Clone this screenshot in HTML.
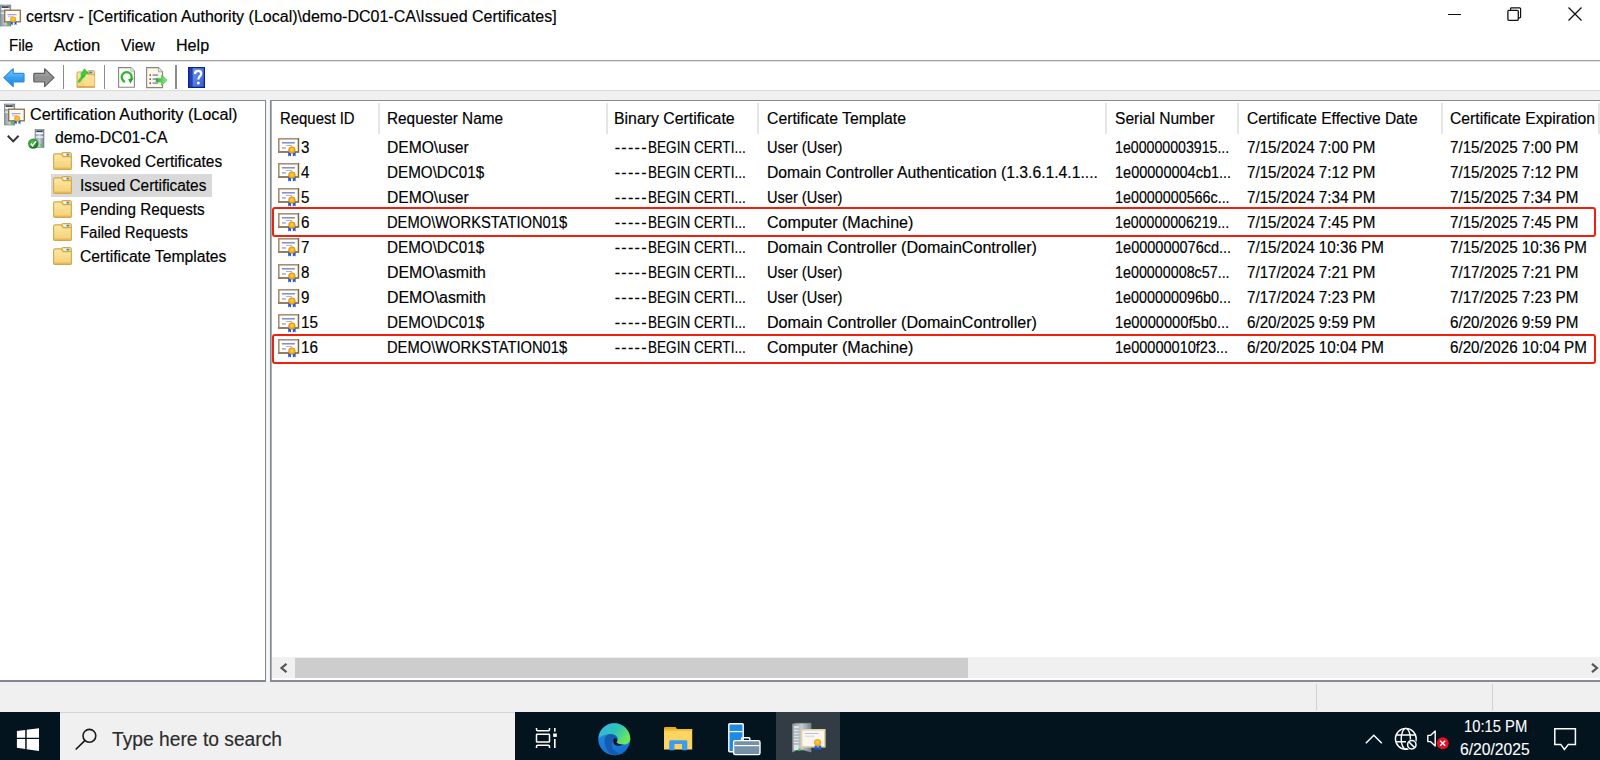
<!DOCTYPE html>
<html><head><meta charset="utf-8">
<style>
*{margin:0;padding:0;box-sizing:border-box}
html,body{width:1600px;height:760px;overflow:hidden;background:#fff}
body{position:relative;font-family:"Liberation Sans",sans-serif}
.t{position:absolute;white-space:pre;line-height:1;transform-origin:0 0;-webkit-text-stroke:0.18px currentColor}
.a{position:absolute}
svg{position:absolute;overflow:visible}
</style></head><body>
<!-- menu line -->
<div class="a" style="left:0;top:60px;width:1600px;height:1px;background:#a0a0a0"></div>
<div class="a" style="left:0;top:61px;width:1600px;height:1px;background:#e3e3e3"></div>
<!-- band -->
<div class="a" style="left:0;top:90px;width:1600px;height:622px;background:#f0f0f0"></div>
<div class="a" style="left:267px;top:100px;width:2px;height:582px;background:#f8f8f8"></div>
<div class="a" style="left:0;top:90px;width:1600px;height:1px;background:#dadada"></div>
<!-- left pane -->
<div class="a" style="left:0;top:100px;width:266px;height:582px;background:#fff;border-top:1px solid #828790;border-right:1px solid #828790;border-bottom:2px solid #828790"></div>
<!-- right pane -->
<div class="a" style="left:270px;top:100px;width:1330px;height:582px;background:#fff;border-top:1px solid #858a93;border-left:1px solid #858a93;border-bottom:2px solid #858a93;box-shadow:inset 1px 0 0 #a9adb4"></div>
<!-- status bar -->
<div class="a" style="left:0;top:682px;width:1600px;height:30px;background:#f0f0f0"></div>
<div class="a" style="left:1316px;top:684px;width:1px;height:26px;background:#d0d0d0"></div>
<div class="a" style="left:1492px;top:684px;width:1px;height:26px;background:#d0d0d0"></div>

<!-- header dividers -->
<div class="a" style="left:378px;top:103px;width:2px;height:31px;background:#e5e5e5"></div>
<div class="a" style="left:606px;top:103px;width:2px;height:31px;background:#e5e5e5"></div>
<div class="a" style="left:757px;top:103px;width:2px;height:31px;background:#e5e5e5"></div>
<div class="a" style="left:1105px;top:103px;width:2px;height:31px;background:#e5e5e5"></div>
<div class="a" style="left:1237px;top:103px;width:2px;height:31px;background:#e5e5e5"></div>
<div class="a" style="left:1441px;top:103px;width:2px;height:31px;background:#e5e5e5"></div>
<div class="a" style="left:1598px;top:103px;width:2px;height:31px;background:#e5e5e5"></div>

<!-- tree selection -->
<div class="a" style="left:51px;top:174px;width:161px;height:23px;background:#d9d9d9"></div>

<!-- red boxes -->
<div class="a" style="left:272px;top:207px;width:1324px;height:30px;border:2px solid #f0200c;border-radius:3px"></div>
<div class="a" style="left:272px;top:334px;width:1324px;height:30px;border:2px solid #f0200c;border-radius:3px"></div>

<!-- scrollbar -->
<div class="a" style="left:272px;top:657px;width:1328px;height:21px;background:#f0f0f0"></div>
<div class="a" style="left:295px;top:658px;width:673px;height:20px;background:#cdcdcd"></div>
<svg style="left:279px;top:663px" width="10" height="10" viewBox="0 0 10 10"><path d="M7.5 0.8 L2.5 5 L7.5 9.2" fill="none" stroke="#555" stroke-width="2.2"/></svg>
<svg style="left:1590px;top:663px" width="10" height="10" viewBox="0 0 10 10"><path d="M2 0.8 L7 5 L2 9.2" fill="none" stroke="#555" stroke-width="2.2"/></svg>

<svg width="0" height="0" style="position:absolute"><defs>
<linearGradient id="fold" x1="0" y1="0" x2="0" y2="1"><stop offset="0" stop-color="#fde9a6"/><stop offset="1" stop-color="#f3cf72"/></linearGradient>
<linearGradient id="tower" x1="0" y1="0" x2="1" y2="0"><stop offset="0" stop-color="#8b98a2"/><stop offset="0.5" stop-color="#c3ccd2"/><stop offset="1" stop-color="#76838d"/></linearGradient>
<radialGradient id="seal" cx="0.5" cy="0.45" r="0.6"><stop offset="0" stop-color="#ffcf50"/><stop offset="1" stop-color="#e49a08"/></radialGradient>
<linearGradient id="blueArr" x1="0" y1="0" x2="0" y2="1"><stop offset="0" stop-color="#7fd0ff"/><stop offset="0.5" stop-color="#3aa2f2"/><stop offset="1" stop-color="#1a7fdc"/></linearGradient>
<linearGradient id="grayArr" x1="0" y1="0" x2="0" y2="1"><stop offset="0" stop-color="#b8b8b8"/><stop offset="0.5" stop-color="#8e8e8e"/><stop offset="1" stop-color="#9c9c9c"/></linearGradient>
<radialGradient id="chk" cx="0.4" cy="0.35" r="0.7"><stop offset="0" stop-color="#4cc24c"/><stop offset="1" stop-color="#0d6e16"/></radialGradient>
<linearGradient id="help" x1="0" y1="0" x2="1" y2="0"><stop offset="0" stop-color="#1d3aa8"/><stop offset="0.25" stop-color="#2546b8"/><stop offset="0.3" stop-color="#4d7ee8"/><stop offset="1" stop-color="#3a64d0"/></linearGradient>
<linearGradient id="edge" x1="0" y1="1" x2="1" y2="0"><stop offset="0" stop-color="#0c59a4"/><stop offset="0.55" stop-color="#1b9de2"/><stop offset="1" stop-color="#5fd36a"/></linearGradient>
</defs></svg>
<svg style="left:0px;top:5px" width="21" height="22" viewBox="0 0 21 22">
<rect x="0.3" y="0" width="10.5" height="21" fill="url(#tower)" stroke="#6d7a84" stroke-width="0.6"/>
<rect x="2" y="1.4" width="6.5" height="1.4" fill="#24343e"/>
<rect x="1.2" y="3" width="8.6" height="1.9" fill="#f4f6f8"/>
<rect x="1.2" y="7.4" width="8.6" height="1.4" fill="#eef1f3"/>
<rect x="7.2" y="17.6" width="2.6" height="2" fill="#3ccf3c"/>
<rect x="4.7" y="5.2" width="15.6" height="11.6" fill="#fffaf0" stroke="#8c6e48" stroke-width="1.3"/>
<rect x="7.5" y="9.2" width="9" height="1" fill="#8090dd"/>
<rect x="8" y="11.4" width="5" height="0.8" fill="#aab2e0"/>
<path d="M10.8 16.5 h2 v3.8 l-1 -1 l-1 1z" fill="#1a5ce8"/><path d="M14.5 16.5 h2 v3.8 l-1 -1 l-1 1z" fill="#1a5ce8"/>
<circle cx="13.2" cy="14.6" r="3" fill="url(#seal)"/>
</svg>
<svg style="left:4px;top:103.6px" width="21" height="22" viewBox="0 0 21 22">
<rect x="0.3" y="0" width="10.5" height="21" fill="url(#tower)" stroke="#6d7a84" stroke-width="0.6"/>
<rect x="2" y="1.4" width="6.5" height="1.4" fill="#24343e"/>
<rect x="1.2" y="3" width="8.6" height="1.9" fill="#f4f6f8"/>
<rect x="1.2" y="7.4" width="8.6" height="1.4" fill="#eef1f3"/>
<rect x="7.2" y="17.6" width="2.6" height="2" fill="#3ccf3c"/>
<rect x="4.7" y="5.2" width="15.6" height="11.6" fill="#fffaf0" stroke="#8c6e48" stroke-width="1.3"/>
<rect x="7.5" y="9.2" width="9" height="1" fill="#8090dd"/>
<rect x="8" y="11.4" width="5" height="0.8" fill="#aab2e0"/>
<path d="M10.8 16.5 h2 v3.8 l-1 -1 l-1 1z" fill="#1a5ce8"/><path d="M14.5 16.5 h2 v3.8 l-1 -1 l-1 1z" fill="#1a5ce8"/>
<circle cx="13.2" cy="14.6" r="3" fill="url(#seal)"/>
</svg>
<svg style="left:7px;top:135px" width="13" height="8" viewBox="0 0 13 8"><path d="M0.8 0.8 L6.2 6.4 L11.6 0.8" fill="none" stroke="#333" stroke-width="2"/></svg>
<svg style="left:27px;top:128.5px" width="18" height="20" viewBox="0 0 18 20">
<rect x="8" y="0.5" width="9" height="18" fill="url(#tower)" stroke="#6d7a84" stroke-width="0.6"/>
<rect x="9.6" y="1.6" width="5.8" height="1.3" fill="#24343e"/>
<rect x="8.8" y="3.4" width="7.4" height="1.8" fill="#f4f6f8"/>
<rect x="8.8" y="7.3" width="7.4" height="1.6" fill="#eef1f3"/>
<rect x="13.5" y="15.2" width="2.4" height="2" fill="#3ccf3c"/>
<circle cx="6.2" cy="14.6" r="5.2" fill="url(#chk)"/>
<path d="M3.6 14.6 L5.6 16.8 L9 12.2" fill="none" stroke="#fff" stroke-width="1.6"/>
</svg>
<svg style="left:53px;top:152.0px" width="19" height="18" viewBox="0 0 19 18">
<rect x="8.6" y="0.5" width="9.8" height="6" rx="1.6" fill="#f6d98a" stroke="#d3a64a" stroke-width="1"/>
<rect x="10.3" y="1.7" width="4" height="1.8" rx="0.9" fill="#ffffff"/><rect x="13.2" y="1.7" width="3.2" height="1.8" rx="0.9" fill="#3b8ee6"/>
<path d="M0.6 3.2 Q0.6 1.9 1.9 1.9 H7.6 Q8.4 1.9 8.9 2.6 L10.2 4.6 H17.1 Q18.4 4.6 18.4 5.9 V16.2 Q18.4 17.5 17.1 17.5 H1.9 Q0.6 17.5 0.6 16.2 Z" fill="url(#fold)" stroke="#d3a64a" stroke-width="1.1"/>
<rect x="1.3" y="15.6" width="16.4" height="1.4" fill="#e2b858"/>
</svg>
<svg style="left:53px;top:175.8px" width="19" height="18" viewBox="0 0 19 18">
<rect x="8.6" y="0.5" width="9.8" height="6" rx="1.6" fill="#f6d98a" stroke="#d3a64a" stroke-width="1"/>
<rect x="10.3" y="1.7" width="4" height="1.8" rx="0.9" fill="#ffffff"/><rect x="13.2" y="1.7" width="3.2" height="1.8" rx="0.9" fill="#3b8ee6"/>
<path d="M0.6 3.2 Q0.6 1.9 1.9 1.9 H7.6 Q8.4 1.9 8.9 2.6 L10.2 4.6 H17.1 Q18.4 4.6 18.4 5.9 V16.2 Q18.4 17.5 17.1 17.5 H1.9 Q0.6 17.5 0.6 16.2 Z" fill="url(#fold)" stroke="#d3a64a" stroke-width="1.1"/>
<rect x="1.3" y="15.6" width="16.4" height="1.4" fill="#e2b858"/>
</svg>
<svg style="left:53px;top:199.6px" width="19" height="18" viewBox="0 0 19 18">
<rect x="8.6" y="0.5" width="9.8" height="6" rx="1.6" fill="#f6d98a" stroke="#d3a64a" stroke-width="1"/>
<rect x="10.3" y="1.7" width="4" height="1.8" rx="0.9" fill="#ffffff"/><rect x="13.2" y="1.7" width="3.2" height="1.8" rx="0.9" fill="#3b8ee6"/>
<path d="M0.6 3.2 Q0.6 1.9 1.9 1.9 H7.6 Q8.4 1.9 8.9 2.6 L10.2 4.6 H17.1 Q18.4 4.6 18.4 5.9 V16.2 Q18.4 17.5 17.1 17.5 H1.9 Q0.6 17.5 0.6 16.2 Z" fill="url(#fold)" stroke="#d3a64a" stroke-width="1.1"/>
<rect x="1.3" y="15.6" width="16.4" height="1.4" fill="#e2b858"/>
</svg>
<svg style="left:53px;top:223.4px" width="19" height="18" viewBox="0 0 19 18">
<rect x="8.6" y="0.5" width="9.8" height="6" rx="1.6" fill="#f6d98a" stroke="#d3a64a" stroke-width="1"/>
<rect x="10.3" y="1.7" width="4" height="1.8" rx="0.9" fill="#ffffff"/><rect x="13.2" y="1.7" width="3.2" height="1.8" rx="0.9" fill="#3b8ee6"/>
<path d="M0.6 3.2 Q0.6 1.9 1.9 1.9 H7.6 Q8.4 1.9 8.9 2.6 L10.2 4.6 H17.1 Q18.4 4.6 18.4 5.9 V16.2 Q18.4 17.5 17.1 17.5 H1.9 Q0.6 17.5 0.6 16.2 Z" fill="url(#fold)" stroke="#d3a64a" stroke-width="1.1"/>
<rect x="1.3" y="15.6" width="16.4" height="1.4" fill="#e2b858"/>
</svg>
<svg style="left:53px;top:247.2px" width="19" height="18" viewBox="0 0 19 18">
<rect x="8.6" y="0.5" width="9.8" height="6" rx="1.6" fill="#f6d98a" stroke="#d3a64a" stroke-width="1"/>
<rect x="10.3" y="1.7" width="4" height="1.8" rx="0.9" fill="#ffffff"/><rect x="13.2" y="1.7" width="3.2" height="1.8" rx="0.9" fill="#3b8ee6"/>
<path d="M0.6 3.2 Q0.6 1.9 1.9 1.9 H7.6 Q8.4 1.9 8.9 2.6 L10.2 4.6 H17.1 Q18.4 4.6 18.4 5.9 V16.2 Q18.4 17.5 17.1 17.5 H1.9 Q0.6 17.5 0.6 16.2 Z" fill="url(#fold)" stroke="#d3a64a" stroke-width="1.1"/>
<rect x="1.3" y="15.6" width="16.4" height="1.4" fill="#e2b858"/>
</svg>
<svg style="left:278px;top:138.0px" width="22.0" height="19.0" viewBox="0 0 22 19">
<rect x="0" y="0" width="21.2" height="14.8" fill="#7a6242"/>
<rect x="0" y="0" width="20" height="13.6" fill="#a89172"/>
<rect x="1.6" y="1.6" width="18" height="11.4" fill="#fffdf8"/>
<rect x="3.9" y="4.1" width="13" height="1.4" fill="#7384d2"/>
<rect x="8" y="7" width="6" height="0.9" fill="#a2aade"/>
<rect x="4" y="9.2" width="3.8" height="1.5" fill="#9aa4dc"/>
<path d="M10.2 14 H13 V18.6 L11.6 17.6 L10.2 18.6 Z" fill="#1c55e6"/>
<path d="M14.8 14 H17.6 V18.6 L16.2 17.6 L14.8 18.6 Z" fill="#1c55e6"/>
<circle cx="13.9" cy="12.1" r="3.5" fill="url(#seal)"/>
<circle cx="13.9" cy="12.1" r="3.2" fill="none" stroke="#d08a00" stroke-width="0.6"/>
</svg>
<svg style="left:278px;top:163.1px" width="22.0" height="19.0" viewBox="0 0 22 19">
<rect x="0" y="0" width="21.2" height="14.8" fill="#7a6242"/>
<rect x="0" y="0" width="20" height="13.6" fill="#a89172"/>
<rect x="1.6" y="1.6" width="18" height="11.4" fill="#fffdf8"/>
<rect x="3.9" y="4.1" width="13" height="1.4" fill="#7384d2"/>
<rect x="8" y="7" width="6" height="0.9" fill="#a2aade"/>
<rect x="4" y="9.2" width="3.8" height="1.5" fill="#9aa4dc"/>
<path d="M10.2 14 H13 V18.6 L11.6 17.6 L10.2 18.6 Z" fill="#1c55e6"/>
<path d="M14.8 14 H17.6 V18.6 L16.2 17.6 L14.8 18.6 Z" fill="#1c55e6"/>
<circle cx="13.9" cy="12.1" r="3.5" fill="url(#seal)"/>
<circle cx="13.9" cy="12.1" r="3.2" fill="none" stroke="#d08a00" stroke-width="0.6"/>
</svg>
<svg style="left:278px;top:188.2px" width="22.0" height="19.0" viewBox="0 0 22 19">
<rect x="0" y="0" width="21.2" height="14.8" fill="#7a6242"/>
<rect x="0" y="0" width="20" height="13.6" fill="#a89172"/>
<rect x="1.6" y="1.6" width="18" height="11.4" fill="#fffdf8"/>
<rect x="3.9" y="4.1" width="13" height="1.4" fill="#7384d2"/>
<rect x="8" y="7" width="6" height="0.9" fill="#a2aade"/>
<rect x="4" y="9.2" width="3.8" height="1.5" fill="#9aa4dc"/>
<path d="M10.2 14 H13 V18.6 L11.6 17.6 L10.2 18.6 Z" fill="#1c55e6"/>
<path d="M14.8 14 H17.6 V18.6 L16.2 17.6 L14.8 18.6 Z" fill="#1c55e6"/>
<circle cx="13.9" cy="12.1" r="3.5" fill="url(#seal)"/>
<circle cx="13.9" cy="12.1" r="3.2" fill="none" stroke="#d08a00" stroke-width="0.6"/>
</svg>
<svg style="left:278px;top:213.3px" width="22.0" height="19.0" viewBox="0 0 22 19">
<rect x="0" y="0" width="21.2" height="14.8" fill="#7a6242"/>
<rect x="0" y="0" width="20" height="13.6" fill="#a89172"/>
<rect x="1.6" y="1.6" width="18" height="11.4" fill="#fffdf8"/>
<rect x="3.9" y="4.1" width="13" height="1.4" fill="#7384d2"/>
<rect x="8" y="7" width="6" height="0.9" fill="#a2aade"/>
<rect x="4" y="9.2" width="3.8" height="1.5" fill="#9aa4dc"/>
<path d="M10.2 14 H13 V18.6 L11.6 17.6 L10.2 18.6 Z" fill="#1c55e6"/>
<path d="M14.8 14 H17.6 V18.6 L16.2 17.6 L14.8 18.6 Z" fill="#1c55e6"/>
<circle cx="13.9" cy="12.1" r="3.5" fill="url(#seal)"/>
<circle cx="13.9" cy="12.1" r="3.2" fill="none" stroke="#d08a00" stroke-width="0.6"/>
</svg>
<svg style="left:278px;top:238.4px" width="22.0" height="19.0" viewBox="0 0 22 19">
<rect x="0" y="0" width="21.2" height="14.8" fill="#7a6242"/>
<rect x="0" y="0" width="20" height="13.6" fill="#a89172"/>
<rect x="1.6" y="1.6" width="18" height="11.4" fill="#fffdf8"/>
<rect x="3.9" y="4.1" width="13" height="1.4" fill="#7384d2"/>
<rect x="8" y="7" width="6" height="0.9" fill="#a2aade"/>
<rect x="4" y="9.2" width="3.8" height="1.5" fill="#9aa4dc"/>
<path d="M10.2 14 H13 V18.6 L11.6 17.6 L10.2 18.6 Z" fill="#1c55e6"/>
<path d="M14.8 14 H17.6 V18.6 L16.2 17.6 L14.8 18.6 Z" fill="#1c55e6"/>
<circle cx="13.9" cy="12.1" r="3.5" fill="url(#seal)"/>
<circle cx="13.9" cy="12.1" r="3.2" fill="none" stroke="#d08a00" stroke-width="0.6"/>
</svg>
<svg style="left:278px;top:263.5px" width="22.0" height="19.0" viewBox="0 0 22 19">
<rect x="0" y="0" width="21.2" height="14.8" fill="#7a6242"/>
<rect x="0" y="0" width="20" height="13.6" fill="#a89172"/>
<rect x="1.6" y="1.6" width="18" height="11.4" fill="#fffdf8"/>
<rect x="3.9" y="4.1" width="13" height="1.4" fill="#7384d2"/>
<rect x="8" y="7" width="6" height="0.9" fill="#a2aade"/>
<rect x="4" y="9.2" width="3.8" height="1.5" fill="#9aa4dc"/>
<path d="M10.2 14 H13 V18.6 L11.6 17.6 L10.2 18.6 Z" fill="#1c55e6"/>
<path d="M14.8 14 H17.6 V18.6 L16.2 17.6 L14.8 18.6 Z" fill="#1c55e6"/>
<circle cx="13.9" cy="12.1" r="3.5" fill="url(#seal)"/>
<circle cx="13.9" cy="12.1" r="3.2" fill="none" stroke="#d08a00" stroke-width="0.6"/>
</svg>
<svg style="left:278px;top:288.6px" width="22.0" height="19.0" viewBox="0 0 22 19">
<rect x="0" y="0" width="21.2" height="14.8" fill="#7a6242"/>
<rect x="0" y="0" width="20" height="13.6" fill="#a89172"/>
<rect x="1.6" y="1.6" width="18" height="11.4" fill="#fffdf8"/>
<rect x="3.9" y="4.1" width="13" height="1.4" fill="#7384d2"/>
<rect x="8" y="7" width="6" height="0.9" fill="#a2aade"/>
<rect x="4" y="9.2" width="3.8" height="1.5" fill="#9aa4dc"/>
<path d="M10.2 14 H13 V18.6 L11.6 17.6 L10.2 18.6 Z" fill="#1c55e6"/>
<path d="M14.8 14 H17.6 V18.6 L16.2 17.6 L14.8 18.6 Z" fill="#1c55e6"/>
<circle cx="13.9" cy="12.1" r="3.5" fill="url(#seal)"/>
<circle cx="13.9" cy="12.1" r="3.2" fill="none" stroke="#d08a00" stroke-width="0.6"/>
</svg>
<svg style="left:278px;top:313.70000000000005px" width="22.0" height="19.0" viewBox="0 0 22 19">
<rect x="0" y="0" width="21.2" height="14.8" fill="#7a6242"/>
<rect x="0" y="0" width="20" height="13.6" fill="#a89172"/>
<rect x="1.6" y="1.6" width="18" height="11.4" fill="#fffdf8"/>
<rect x="3.9" y="4.1" width="13" height="1.4" fill="#7384d2"/>
<rect x="8" y="7" width="6" height="0.9" fill="#a2aade"/>
<rect x="4" y="9.2" width="3.8" height="1.5" fill="#9aa4dc"/>
<path d="M10.2 14 H13 V18.6 L11.6 17.6 L10.2 18.6 Z" fill="#1c55e6"/>
<path d="M14.8 14 H17.6 V18.6 L16.2 17.6 L14.8 18.6 Z" fill="#1c55e6"/>
<circle cx="13.9" cy="12.1" r="3.5" fill="url(#seal)"/>
<circle cx="13.9" cy="12.1" r="3.2" fill="none" stroke="#d08a00" stroke-width="0.6"/>
</svg>
<svg style="left:278px;top:338.8px" width="22.0" height="19.0" viewBox="0 0 22 19">
<rect x="0" y="0" width="21.2" height="14.8" fill="#7a6242"/>
<rect x="0" y="0" width="20" height="13.6" fill="#a89172"/>
<rect x="1.6" y="1.6" width="18" height="11.4" fill="#fffdf8"/>
<rect x="3.9" y="4.1" width="13" height="1.4" fill="#7384d2"/>
<rect x="8" y="7" width="6" height="0.9" fill="#a2aade"/>
<rect x="4" y="9.2" width="3.8" height="1.5" fill="#9aa4dc"/>
<path d="M10.2 14 H13 V18.6 L11.6 17.6 L10.2 18.6 Z" fill="#1c55e6"/>
<path d="M14.8 14 H17.6 V18.6 L16.2 17.6 L14.8 18.6 Z" fill="#1c55e6"/>
<circle cx="13.9" cy="12.1" r="3.5" fill="url(#seal)"/>
<circle cx="13.9" cy="12.1" r="3.2" fill="none" stroke="#d08a00" stroke-width="0.6"/>
</svg>
<svg style="left:3px;top:68px" width="22" height="20" viewBox="0 0 22 20"><path d="M0.8 9.6 L10.2 0.8 V5.4 H20.2 Q21 5.4 21 6.2 V13.2 Q21 14 20.2 14 H10.2 V18.6 Z" fill="url(#blueArr)" stroke="#2d8ee0" stroke-width="1.2" stroke-linejoin="round"/></svg>
<svg style="left:33px;top:68px" width="22" height="20" viewBox="0 0 22 20"><path d="M21 9.6 L11.6 0.8 V5.4 H1.6 Q0.8 5.4 0.8 6.2 V13.2 Q0.8 14 1.6 14 H11.6 V18.6 Z" fill="url(#grayArr)" stroke="#5e5e5e" stroke-width="1.2" stroke-linejoin="round"/></svg>
<div class="a" style="left:62.5px;top:65px;width:1.5px;height:24px;background:#8c8c8c"></div>
<div class="a" style="left:103.5px;top:65px;width:1.5px;height:24px;background:#8c8c8c"></div>
<div class="a" style="left:175px;top:65px;width:1.5px;height:24px;background:#8c8c8c"></div>
<svg style="left:75.5px;top:68px" width="20" height="21" viewBox="0 0 20 21">
<path d="M1 5.2 Q1 4 2.2 4 H8 L9.2 5.6 H17.6 Q18.6 5.6 18.6 6.6 V19.4 H1 Z" fill="url(#fold)" stroke="#cfa24c" stroke-width="1"/>
<rect x="11.6" y="2.6" width="7" height="4" rx="1.6" fill="#f6d98a" stroke="#cfa24c" stroke-width="0.8"/>
<rect x="13" y="3.6" width="3.4" height="1.8" rx="0.9" fill="#3b8ee6"/>
<rect x="8.4" y="8" width="10.2" height="11.4" fill="#fbe096" opacity="0.7"/>
<rect x="1" y="18" width="17.6" height="1.6" fill="#d9ad52"/>
<path d="M3.2 13.4 Q5.4 9.6 8.2 7.6" fill="none" stroke="#3ccc3c" stroke-width="2.8" stroke-linecap="round"/>
<path d="M8.4 0.8 L12.8 5.6 L9.2 6.4 L5.4 9.4 L5 5.8 Z" fill="#3ccc3c" stroke="#2aa82a" stroke-width="0.5"/>
</svg>
<svg style="left:118px;top:67px" width="18" height="21" viewBox="0 0 18 21">
<path d="M0.6 0.6 H12.8 L16.4 4.2 V20.2 H0.6 Z" fill="#fff" stroke="#858585" stroke-width="1.1"/>
<path d="M12.8 0.6 V4.2 H16.4" fill="#ececec" stroke="#a8a8a8" stroke-width="0.7"/>
<path d="M7 14.8 A5 5 0 1 1 12.6 13.2" fill="none" stroke="#2dbb2d" stroke-width="2.3"/>
<path d="M10.2 12.2 L15.6 11.2 L12.4 16.4 Z" fill="#1fa81f"/>
</svg>
<svg style="left:146px;top:67px" width="22" height="22" viewBox="0 0 22 22">
<path d="M0.6 0.6 H12.4 L16.6 4.8 V20.6 H0.6 Z" fill="#fcf8e6" stroke="#858585" stroke-width="1.1"/>
<path d="M12.4 0.6 V4.8 H16.6" fill="#e6e6e6" stroke="#9a9a9a" stroke-width="0.8"/>
<rect x="3.5" y="7.4" width="1.4" height="1.4" fill="#333"/><rect x="6.6" y="7.4" width="5.6" height="1.3" fill="#7a7ab8"/>
<rect x="3.5" y="11.4" width="1.4" height="1.4" fill="#333"/><rect x="6.6" y="11.4" width="5.6" height="1.3" fill="#7a7ab8"/>
<rect x="3.5" y="15.4" width="1.4" height="1.4" fill="#333"/><rect x="6.6" y="15.4" width="5.6" height="1.3" fill="#7a7ab8"/>
<defs><linearGradient id="expG" x1="0" y1="0" x2="1" y2="0"><stop offset="0" stop-color="#2fae2f"/><stop offset="1" stop-color="#8ef08e"/></linearGradient></defs><path d="M10 11.4 H15.6 V8 L21.2 13.2 L15.6 18.4 V15 H10 Z" fill="url(#expG)" stroke="#3cb43c" stroke-width="0.6"/>
</svg>
<svg style="left:188px;top:66.5px" width="17" height="21" viewBox="0 0 17 21">
<defs><linearGradient id="helpR" x1="0" y1="0" x2="1" y2="1"><stop offset="0" stop-color="#6b95f0"/><stop offset="1" stop-color="#3560d0"/></linearGradient></defs>
<rect x="0" y="0" width="17" height="21" fill="#0d1f8c"/>
<rect x="1.2" y="1.2" width="3.4" height="18.6" fill="#2440b0"/>
<rect x="4.6" y="1.2" width="11.2" height="18.6" fill="url(#helpR)"/>
<path d="M7 7 Q7 3.8 10.2 3.8 Q13.2 3.8 13.2 6.6 Q13.2 8.6 11.4 9.8 Q10.4 10.6 10.4 12.6" fill="none" stroke="#fff" stroke-width="2.3"/>
<circle cx="10.3" cy="16" r="1.5" fill="#fff"/>
</svg>
<div class="a" style="left:1448px;top:13.5px;width:13px;height:1.5px;background:#111"></div>
<svg style="left:1507px;top:6.5px" width="15" height="14" viewBox="0 0 15 14">
<path d="M3.6 3 V1.6 Q3.6 0.8 4.4 0.8 H12.6 Q13.6 0.8 13.6 1.8 V10 Q13.6 10.8 12.8 10.8 H11.6" fill="none" stroke="#111" stroke-width="1.2"/>
<rect x="0.9" y="3.3" width="10.4" height="10" rx="1" fill="none" stroke="#111" stroke-width="1.3"/>
</svg>
<svg style="left:1568px;top:7px" width="14" height="14" viewBox="0 0 14 14"><path d="M0.5 0.5 L13.5 13.5 M13.5 0.5 L0.5 13.5" stroke="#111" stroke-width="1.3"/></svg>

<!-- taskbar -->
<div class="a" style="left:0;top:712px;width:1600px;height:48px;background:#04141f"></div>
<div class="a" style="left:60px;top:712px;width:455px;height:48px;background:#f0f0f0;border-top:1px solid #d4d4d4"></div>
<div class="a" style="left:776px;top:712px;width:64px;height:48px;background:#313c44"></div>

<svg style="left:17px;top:727.5px" width="23" height="24" viewBox="0 0 23 24">
<path d="M-0.1 3.1 L8.2 2.05 V9.8 H-0.1 Z M9.7 1.86 L22 0.3 V9.8 H9.7 Z M-0.1 11.1 H8.2 V21 L-0.1 19.7 Z M9.7 11.1 H22 V23.1 L9.7 21.2 Z" fill="#fff"/>
</svg>
<svg style="left:75px;top:727.5px" width="23" height="22" viewBox="0 0 23 22"><circle cx="14.4" cy="7.8" r="6.4" fill="none" stroke="#1a1a1a" stroke-width="1.6"/><path d="M9.8 12.6 L1.2 21" stroke="#1a1a1a" stroke-width="1.7" stroke-linecap="round"/></svg>
<svg style="left:535px;top:727px" width="23" height="22" viewBox="0 0 23 22">
<g fill="none" stroke="#fff" stroke-width="1.5">
<path d="M1.5 1 V2.6 Q1.5 3.7 2.6 3.7 H13.4 Q14.5 3.7 14.5 2.6 V1"/>
<rect x="1.5" y="7.3" width="13" height="7.8" rx="0.6"/>
<path d="M1.5 21 V19.4 Q1.5 18.2 2.6 18.2 H13.4 Q14.5 18.2 14.5 19.4 V21"/>
</g>
<rect x="19" y="1" width="1.6" height="3.6" fill="#fff"/>
<rect x="18.2" y="6.5" width="3.6" height="3.4" fill="#fff"/>
<rect x="19" y="12" width="1.6" height="9" fill="#fff"/>
</svg>
<svg style="left:597.5px;top:722.5px" width="33" height="33" viewBox="0 0 33 33">
<defs><linearGradient id="edgeTop" x1="0" y1="0" x2="1" y2="0.6"><stop offset="0" stop-color="#33b4f0"/><stop offset="0.55" stop-color="#2fc4b4"/><stop offset="1" stop-color="#6ee85a"/></linearGradient>
<linearGradient id="edgeBot" x1="0" y1="0" x2="0.3" y2="1"><stop offset="0" stop-color="#2a8fe8"/><stop offset="1" stop-color="#1272d2"/></linearGradient></defs>
<circle cx="16.3" cy="16.3" r="16" fill="url(#edgeBot)"/>
<path d="M0.6 15 C1.2 6.6 8 0.3 16.3 0.3 C25.2 0.3 32.3 7.4 32.3 15.8 C32.3 19.6 29.6 21.6 25.6 21.6 C22 21.6 19.6 20.8 18.4 19.6 C20.6 17.4 20.4 13.6 17.6 12.2 C13.4 10.2 6.6 10.6 0.6 15 Z" fill="url(#edgeTop)"/>
<path d="M6.6 17.2 C6.6 11.6 13.2 10 17 12.4 C19.8 14 20 17.6 18 19.6 C17 20.6 15 20.2 15.4 18.2 C13.4 19.8 13.2 25.2 17.6 28.6 C21.4 31.6 26.2 30.6 29.4 26.6 C26.6 30.6 21.8 32.6 16.8 32.3 C11 31.8 6.6 25 6.6 17.2 Z" fill="#155cb0"/>
<path d="M15.4 18.2 C15 15.4 17.6 14.6 18.8 16 C19.4 17.2 19.2 18.8 18.4 19.6 C20 21.2 23.4 21.8 25.6 21.6 C23.2 22.8 18.6 23.2 16.4 21.4 C15.8 20.6 15.4 19.4 15.4 18.2 Z" fill="#04141f"/>
</svg>
<svg style="left:664.4px;top:727px" width="29" height="24" viewBox="0 0 29 24">
<path d="M0 1.2 Q0 0 1.2 0 H11.6 L13.4 2.4 H0 Z" fill="#eeaa10"/>
<rect x="0" y="2" width="28.2" height="20.5" fill="#fcd462"/>
<rect x="0" y="2" width="28.2" height="1.8" fill="#f3bb2e"/>
<path d="M5.2 23.3 V14.6 Q5.2 13.2 6.6 13.2 H21.9 Q23.3 13.2 23.3 14.6 V23.3 H18 V17 H10.5 V23.3 Z" fill="#3c9cf0"/>
</svg>
<svg style="left:727.5px;top:722.5px" width="33" height="33" viewBox="0 0 33 33">
<rect x="0.8" y="0.8" width="14.4" height="28" rx="0.8" fill="#1f8ae2" stroke="#ffffff" stroke-width="1.4"/>
<path d="M1.6 8.6 H14.4" stroke="#ffffff" stroke-width="1.2"/>
<path d="M13.6 17.8 V15.6 Q13.6 14.8 14.4 14.8 H21 Q21.8 14.8 21.8 15.6 V17.8" fill="none" stroke="#ffffff" stroke-width="1.4"/>
<rect x="5.6" y="17.6" width="26.4" height="14" rx="1.6" fill="#7491a8" stroke="#ffffff" stroke-width="1.4"/>
<path d="M6.4 22.6 H31.2" stroke="#ffffff" stroke-width="1.2"/>
</svg>
<svg style="left:791.5px;top:722.5px" width="34" height="30" viewBox="0 0 34 30">
<path d="M0.5 1 L5 0.3 H19 V29 L11.5 27 H5 L0.5 29 Z" fill="url(#tower)" stroke="#8c969e" stroke-width="0.6"/>
<rect x="1.8" y="3" width="5" height="24" fill="#dfe4e8"/>
<path d="M2 6 H7 M2 9 H7 M2 12 H7 M2 15 H7 M2 18 H7 M2 21 H7" stroke="#7b868e" stroke-width="0.8"/>
<rect x="6.2" y="25.6" width="2.4" height="2.2" fill="#3ccf3c"/>
<rect x="9.6" y="6.8" width="23.2" height="17" fill="#fbf7ee" stroke="#e3cfa8" stroke-width="1.6"/>
<rect x="12.6" y="10" width="14" height="1" fill="#b8c0e6"/>
<rect x="12.6" y="12.8" width="10" height="0.8" fill="#c8cce6"/>
<path d="M22.8 22.6 h2.6 v4.6 l-1.3 -1 l-1.3 1z" fill="#1a5ce8"/><path d="M26.6 22.6 h2.6 v4.6 l-1.3 -1 l-1.3 1z" fill="#1a5ce8"/>
<circle cx="25.6" cy="19.6" r="3.6" fill="url(#seal)"/>
</svg>
<svg style="left:1365px;top:733.5px" width="18" height="10" viewBox="0 0 18 10"><path d="M0.8 9.2 L8.8 1.2 L16.8 9.2" fill="none" stroke="#fff" stroke-width="1.5"/></svg>
<svg style="left:1394px;top:727px" width="24" height="24" viewBox="0 0 24 24">
<g fill="none" stroke="#fff" stroke-width="1.4">
<circle cx="11.8" cy="11.8" r="10.4"/>
<ellipse cx="11.8" cy="11.8" rx="4.6" ry="10.4"/>
<path d="M2 8 H21.6 M2 14.8 H12"/>
</g>
<circle cx="17.8" cy="17.8" r="5.6" fill="#04141f"/>
<circle cx="17.8" cy="17.8" r="4.2" fill="none" stroke="#fff" stroke-width="1.5"/>
<path d="M15 15 L20.6 20.6" stroke="#fff" stroke-width="1.5"/>
</svg>
<svg style="left:1426.5px;top:730px" width="24" height="20" viewBox="0 0 24 20">
<path d="M0.8 5.4 H3.4 L8.2 0.9 V16 L3.4 11.6 H0.8 Z" fill="none" stroke="#fff" stroke-width="1.4" stroke-linejoin="round"/>
<circle cx="15.7" cy="13.2" r="6" fill="#e81123"/>
<path d="M13.2 10.7 L18.2 15.7 M18.2 10.7 L13.2 15.7" stroke="#fff" stroke-width="1.4"/>
</svg>
<svg style="left:1553.5px;top:727.5px" width="23" height="23" viewBox="0 0 23 23">
<path d="M0.8 0.8 H21.4 V16.4 H14.4 L10.4 21.4 L6.8 16.4 H0.8 Z" fill="none" stroke="#fff" stroke-width="1.5" stroke-linejoin="miter"/>
</svg>

<div class="t" style="left:26.44px;top:8.56px;font-size:16px;color:#000;transform:scaleX(1.0012);">certsrv - [Certification Authority (Local)\demo-DC01-CA\Issued Certificates]</div>
<div class="t" style="left:9.04px;top:37.76px;font-size:16px;color:#000;transform:scaleX(0.9387);">File</div>
<div class="t" style="left:54.04px;top:37.76px;font-size:16px;color:#000;transform:scaleX(1.0389);">Action</div>
<div class="t" style="left:121.04px;top:37.76px;font-size:16px;color:#000;transform:scaleX(0.9799);">View</div>
<div class="t" style="left:175.64px;top:37.76px;font-size:16px;color:#000;transform:scaleX(1.0059);">Help</div>
<div class="t" style="left:30.34px;top:106.76px;font-size:16px;color:#000;transform:scaleX(1.0145);">Certification Authority (Local)</div>
<div class="t" style="left:55.44px;top:130.26px;font-size:16px;color:#000;transform:scaleX(0.9893);">demo-DC01-CA</div>
<div class="t" style="left:80.24px;top:153.96px;font-size:16px;color:#000;transform:scaleX(0.9626);">Revoked Certificates</div>
<div class="t" style="left:80.24px;top:177.76px;font-size:16px;color:#000;transform:scaleX(0.9597);">Issued Certificates</div>
<div class="t" style="left:80.24px;top:201.56px;font-size:16px;color:#000;transform:scaleX(0.9536);">Pending Requests</div>
<div class="t" style="left:80.24px;top:225.36px;font-size:16px;color:#000;transform:scaleX(0.9332);">Failed Requests</div>
<div class="t" style="left:80.24px;top:249.26px;font-size:16px;color:#000;transform:scaleX(0.9818);">Certificate Templates</div>
<div class="t" style="left:280.04px;top:111.16px;font-size:16px;color:#000;transform:scaleX(0.9320);">Request ID</div>
<div class="t" style="left:387.04px;top:111.16px;font-size:16px;color:#000;transform:scaleX(0.9590);">Requester Name</div>
<div class="t" style="left:614.34px;top:111.16px;font-size:16px;color:#000;transform:scaleX(0.9899);">Binary Certificate</div>
<div class="t" style="left:766.84px;top:111.16px;font-size:16px;color:#000;transform:scaleX(0.9851);">Certificate Template</div>
<div class="t" style="left:1114.64px;top:111.16px;font-size:16px;color:#000;transform:scaleX(0.9739);">Serial Number</div>
<div class="t" style="left:1246.84px;top:111.16px;font-size:16px;color:#000;transform:scaleX(0.9711);">Certificate Effective Date</div>
<div class="t" style="left:1450.44px;top:111.16px;font-size:16px;color:#000;transform:scaleX(0.9829);">Certificate Expiration</div>
<div class="t" style="left:301.04px;top:139.56px;font-size:16px;color:#000;transform:scaleX(0.9496);">3</div>
<div class="t" style="left:387.04px;top:139.56px;font-size:16px;color:#000;transform:scaleX(0.9763);">DEMO\user</div>
<div class="t" style="left:614.64px;top:139.56px;font-size:16px;color:#000;transform:scaleX(1.0000);letter-spacing:1.3px;">-----</div>
<div class="t" style="left:647.94px;top:139.56px;font-size:16px;color:#000;transform:scaleX(0.8475);">BEGIN CERTI...</div>
<div class="t" style="left:766.84px;top:139.56px;font-size:16px;color:#000;transform:scaleX(0.9120);">User (User)</div>
<div class="t" style="left:1114.64px;top:139.56px;font-size:16px;color:#000;transform:scaleX(0.8852);">1e00000003915...</div>
<div class="t" style="left:1246.84px;top:139.56px;font-size:16px;color:#000;transform:scaleX(0.9496);">7/15/2024 7:00 PM</div>
<div class="t" style="left:1450.44px;top:139.56px;font-size:16px;color:#000;transform:scaleX(0.9496);">7/15/2025 7:00 PM</div>
<div class="t" style="left:301.04px;top:164.66px;font-size:16px;color:#000;transform:scaleX(0.9496);">4</div>
<div class="t" style="left:387.04px;top:164.66px;font-size:16px;color:#000;transform:scaleX(0.9506);">DEMO\DC01$</div>
<div class="t" style="left:614.64px;top:164.66px;font-size:16px;color:#000;transform:scaleX(1.0000);letter-spacing:1.3px;">-----</div>
<div class="t" style="left:647.94px;top:164.66px;font-size:16px;color:#000;transform:scaleX(0.8475);">BEGIN CERTI...</div>
<div class="t" style="left:766.84px;top:164.66px;font-size:16px;color:#000;transform:scaleX(0.9817);">Domain Controller Authentication (1.3.6.1.4.1....</div>
<div class="t" style="left:1114.64px;top:164.66px;font-size:16px;color:#000;transform:scaleX(0.9061);">1e00000004cb1...</div>
<div class="t" style="left:1246.84px;top:164.66px;font-size:16px;color:#000;transform:scaleX(0.9496);">7/15/2024 7:12 PM</div>
<div class="t" style="left:1450.44px;top:164.66px;font-size:16px;color:#000;transform:scaleX(0.9496);">7/15/2025 7:12 PM</div>
<div class="t" style="left:301.04px;top:189.76px;font-size:16px;color:#000;transform:scaleX(0.9496);">5</div>
<div class="t" style="left:387.04px;top:189.76px;font-size:16px;color:#000;transform:scaleX(0.9763);">DEMO\user</div>
<div class="t" style="left:614.64px;top:189.76px;font-size:16px;color:#000;transform:scaleX(1.0000);letter-spacing:1.3px;">-----</div>
<div class="t" style="left:647.94px;top:189.76px;font-size:16px;color:#000;transform:scaleX(0.8475);">BEGIN CERTI...</div>
<div class="t" style="left:766.84px;top:189.76px;font-size:16px;color:#000;transform:scaleX(0.9120);">User (User)</div>
<div class="t" style="left:1114.64px;top:189.76px;font-size:16px;color:#000;transform:scaleX(0.8944);">1e0000000566c...</div>
<div class="t" style="left:1246.84px;top:189.76px;font-size:16px;color:#000;transform:scaleX(0.9496);">7/15/2024 7:34 PM</div>
<div class="t" style="left:1450.44px;top:189.76px;font-size:16px;color:#000;transform:scaleX(0.9496);">7/15/2025 7:34 PM</div>
<div class="t" style="left:301.04px;top:214.86px;font-size:16px;color:#000;transform:scaleX(0.9496);">6</div>
<div class="t" style="left:387.04px;top:214.86px;font-size:16px;color:#000;transform:scaleX(0.9195);">DEMO\WORKSTATION01$</div>
<div class="t" style="left:614.64px;top:214.86px;font-size:16px;color:#000;transform:scaleX(1.0000);letter-spacing:1.3px;">-----</div>
<div class="t" style="left:647.94px;top:214.86px;font-size:16px;color:#000;transform:scaleX(0.8475);">BEGIN CERTI...</div>
<div class="t" style="left:766.84px;top:214.86px;font-size:16px;color:#000;transform:scaleX(1.0039);">Computer (Machine)</div>
<div class="t" style="left:1114.64px;top:214.86px;font-size:16px;color:#000;transform:scaleX(0.8852);">1e00000006219...</div>
<div class="t" style="left:1246.84px;top:214.86px;font-size:16px;color:#000;transform:scaleX(0.9496);">7/15/2024 7:45 PM</div>
<div class="t" style="left:1450.44px;top:214.86px;font-size:16px;color:#000;transform:scaleX(0.9496);">7/15/2025 7:45 PM</div>
<div class="t" style="left:301.04px;top:239.96px;font-size:16px;color:#000;transform:scaleX(0.9496);">7</div>
<div class="t" style="left:387.04px;top:239.96px;font-size:16px;color:#000;transform:scaleX(0.9506);">DEMO\DC01$</div>
<div class="t" style="left:614.64px;top:239.96px;font-size:16px;color:#000;transform:scaleX(1.0000);letter-spacing:1.3px;">-----</div>
<div class="t" style="left:647.94px;top:239.96px;font-size:16px;color:#000;transform:scaleX(0.8475);">BEGIN CERTI...</div>
<div class="t" style="left:766.84px;top:239.96px;font-size:16px;color:#000;transform:scaleX(1.0051);">Domain Controller (DomainController)</div>
<div class="t" style="left:1114.64px;top:239.96px;font-size:16px;color:#000;transform:scaleX(0.9061);">1e000000076cd...</div>
<div class="t" style="left:1246.84px;top:239.96px;font-size:16px;color:#000;transform:scaleX(0.9496);">7/15/2024 10:36 PM</div>
<div class="t" style="left:1450.44px;top:239.96px;font-size:16px;color:#000;transform:scaleX(0.9496);">7/15/2025 10:36 PM</div>
<div class="t" style="left:301.04px;top:265.06px;font-size:16px;color:#000;transform:scaleX(0.9496);">8</div>
<div class="t" style="left:387.04px;top:265.06px;font-size:16px;color:#000;transform:scaleX(0.9932);">DEMO\asmith</div>
<div class="t" style="left:614.64px;top:265.06px;font-size:16px;color:#000;transform:scaleX(1.0000);letter-spacing:1.3px;">-----</div>
<div class="t" style="left:647.94px;top:265.06px;font-size:16px;color:#000;transform:scaleX(0.8475);">BEGIN CERTI...</div>
<div class="t" style="left:766.84px;top:265.06px;font-size:16px;color:#000;transform:scaleX(0.9120);">User (User)</div>
<div class="t" style="left:1114.64px;top:265.06px;font-size:16px;color:#000;transform:scaleX(0.8944);">1e00000008c57...</div>
<div class="t" style="left:1246.84px;top:265.06px;font-size:16px;color:#000;transform:scaleX(0.9496);">7/17/2024 7:21 PM</div>
<div class="t" style="left:1450.44px;top:265.06px;font-size:16px;color:#000;transform:scaleX(0.9496);">7/17/2025 7:21 PM</div>
<div class="t" style="left:301.04px;top:290.16px;font-size:16px;color:#000;transform:scaleX(0.9496);">9</div>
<div class="t" style="left:387.04px;top:290.16px;font-size:16px;color:#000;transform:scaleX(0.9932);">DEMO\asmith</div>
<div class="t" style="left:614.64px;top:290.16px;font-size:16px;color:#000;transform:scaleX(1.0000);letter-spacing:1.3px;">-----</div>
<div class="t" style="left:647.94px;top:290.16px;font-size:16px;color:#000;transform:scaleX(0.8475);">BEGIN CERTI...</div>
<div class="t" style="left:766.84px;top:290.16px;font-size:16px;color:#000;transform:scaleX(0.9120);">User (User)</div>
<div class="t" style="left:1114.64px;top:290.16px;font-size:16px;color:#000;transform:scaleX(0.8999);">1e000000096b0...</div>
<div class="t" style="left:1246.84px;top:290.16px;font-size:16px;color:#000;transform:scaleX(0.9496);">7/17/2024 7:23 PM</div>
<div class="t" style="left:1450.44px;top:290.16px;font-size:16px;color:#000;transform:scaleX(0.9496);">7/17/2025 7:23 PM</div>
<div class="t" style="left:301.04px;top:315.26px;font-size:16px;color:#000;transform:scaleX(0.9496);">15</div>
<div class="t" style="left:387.04px;top:315.26px;font-size:16px;color:#000;transform:scaleX(0.9506);">DEMO\DC01$</div>
<div class="t" style="left:614.64px;top:315.26px;font-size:16px;color:#000;transform:scaleX(1.0000);letter-spacing:1.3px;">-----</div>
<div class="t" style="left:647.94px;top:315.26px;font-size:16px;color:#000;transform:scaleX(0.8475);">BEGIN CERTI...</div>
<div class="t" style="left:766.84px;top:315.26px;font-size:16px;color:#000;transform:scaleX(1.0051);">Domain Controller (DomainController)</div>
<div class="t" style="left:1114.64px;top:315.26px;font-size:16px;color:#000;transform:scaleX(0.9168);">1e0000000f5b0...</div>
<div class="t" style="left:1246.84px;top:315.26px;font-size:16px;color:#000;transform:scaleX(0.9496);">6/20/2025 9:59 PM</div>
<div class="t" style="left:1450.44px;top:315.26px;font-size:16px;color:#000;transform:scaleX(0.9496);">6/20/2026 9:59 PM</div>
<div class="t" style="left:301.04px;top:340.36px;font-size:16px;color:#000;transform:scaleX(0.9496);">16</div>
<div class="t" style="left:387.04px;top:340.36px;font-size:16px;color:#000;transform:scaleX(0.9195);">DEMO\WORKSTATION01$</div>
<div class="t" style="left:614.64px;top:340.36px;font-size:16px;color:#000;transform:scaleX(1.0000);letter-spacing:1.3px;">-----</div>
<div class="t" style="left:647.94px;top:340.36px;font-size:16px;color:#000;transform:scaleX(0.8475);">BEGIN CERTI...</div>
<div class="t" style="left:766.84px;top:340.36px;font-size:16px;color:#000;transform:scaleX(1.0039);">Computer (Machine)</div>
<div class="t" style="left:1114.64px;top:340.36px;font-size:16px;color:#000;transform:scaleX(0.9080);">1e00000010f23...</div>
<div class="t" style="left:1246.84px;top:340.36px;font-size:16px;color:#000;transform:scaleX(0.9496);">6/20/2025 10:04 PM</div>
<div class="t" style="left:1450.44px;top:340.36px;font-size:16px;color:#000;transform:scaleX(0.9496);">6/20/2026 10:04 PM</div>
<div class="t" style="left:111.83px;top:730.29px;font-size:19.5px;color:#2b2b2b;transform:scaleX(0.9863);-webkit-text-stroke:0.15px currentColor;">Type here to search</div>
<div class="t" style="left:1464.34px;top:718.96px;font-size:16px;color:#fff;transform:scaleX(0.9228);-webkit-text-stroke:0.1px currentColor;">10:15 PM</div>
<div class="t" style="left:1460.29px;top:742.36px;font-size:16px;color:#fff;transform:scaleX(0.9784);-webkit-text-stroke:0.1px currentColor;">6/20/2025</div>
</body></html>
